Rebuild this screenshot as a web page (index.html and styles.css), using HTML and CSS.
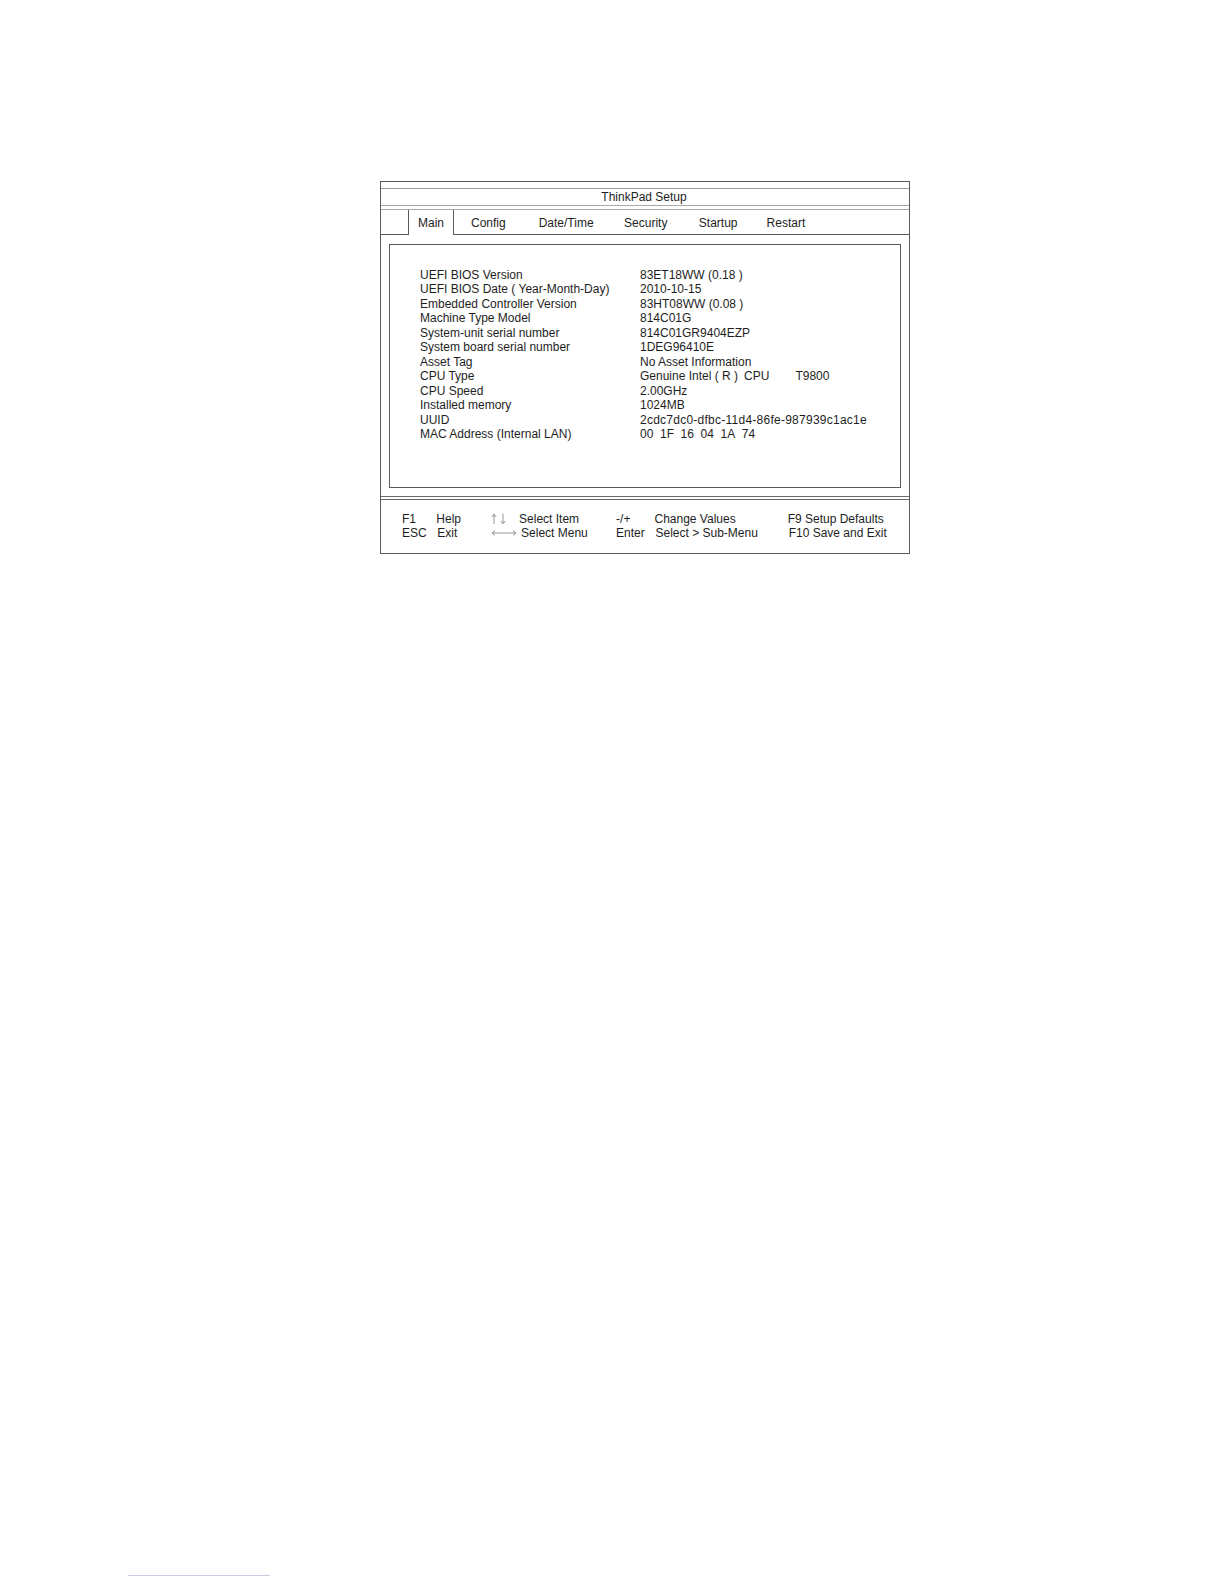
FILE: index.html
```html
<!DOCTYPE html>
<html>
<head>
<meta charset="utf-8">
<title>ThinkPad Setup</title>
<link rel="stylesheet" href="styles.css">
</head>
<body>
<div class="page">
  <div class="setup">
    <div class="top-strip"></div>
    <div class="title">ThinkPad Setup</div>
    <div class="double"></div>
    <div class="tabs">
      <div class="tab-spacer"></div>
      <div class="tab active">Main</div>
      <div class="tab-rest">
        <span class="tab t-config">Config</span>
        <span class="tab t-date">Date/Time</span>
        <span class="tab t-sec">Security</span>
        <span class="tab t-start">Startup</span>
        <span class="tab t-restart">Restart</span>
      </div>
    </div>
    <div class="content">
      <div class="panel">
        <div class="info">
          <div class="lbl">UEFI BIOS Version</div><div class="val">83ET18WW (0.18 )</div>
          <div class="lbl">UEFI BIOS Date ( Year-Month-Day)</div><div class="val">2010-10-15</div>
          <div class="lbl">Embedded Controller Version</div><div class="val">83HT08WW (0.08 )</div>
          <div class="lbl">Machine Type Model</div><div class="val">814C01G</div>
          <div class="lbl">System-unit serial number</div><div class="val">814C01GR9404EZP</div>
          <div class="lbl">System board serial number</div><div class="val">1DEG96410E</div>
          <div class="lbl">Asset Tag</div><div class="val">No Asset Information</div>
          <div class="lbl">CPU Type</div><div class="val"><span class="cpu-a">Genuine Intel ( R )</span><span class="cpu-b">CPU</span><span class="cpu-c">T9800</span></div>
          <div class="lbl">CPU Speed</div><div class="val">2.00GHz</div>
          <div class="lbl">Installed memory</div><div class="val">1024MB</div>
          <div class="lbl">UUID</div><div class="val uuid">2cdc7dc0-dfbc-11d4-86fe-987939c1ac1e</div>
          <div class="lbl">MAC Address (Internal LAN)</div><div class="val"><span class="mac">00</span><span class="mac">1F</span><span class="mac">16</span><span class="mac">04</span><span class="mac">1A</span><span class="mac">74</span></div>
        </div>
      </div>
    </div>
    <div class="double thin"></div>
    <div class="footer">
      <div>F1</div><div>Help</div>
      <div class="arrows"><svg width="20" height="12" viewBox="0 0 20 12"><path d="M3 11V1.5M0.8 4L3 1.2L5.2 4M12 0.5V10.5M9.8 8L12 10.8L14.2 8" fill="none" stroke="#8a8a8a" stroke-width="0.9"/></svg></div><div>Select Item</div>
      <div>-/+</div><div>Change Values</div>
      <div>F9 Setup Defaults</div>
      <div>ESC</div><div class="exit">Exit</div>
      <div class="arrows"><svg width="26" height="12" viewBox="0 0 26 12"><path d="M1 6H25M4 3.8L1 6L4 8.2M22 3.8L25 6L22 8.2" fill="none" stroke="#8a8a8a" stroke-width="0.9"/></svg></div><div class="smenu">Select Menu</div>
      <div>Enter</div><div class="sub">Select &gt; Sub-Menu</div>
      <div class="f10">F10 Save and Exit</div>
    </div>
  </div>
  <div class="footnote-rule"></div>
</div>
</body>
</html>
```

FILE: styles.css
```css
html, body {
  margin: 0;
  padding: 0;
  background: #ffffff;
}

body {
  font-family: "Liberation Sans", Arial, Helvetica, sans-serif;
  font-size: 12px;
  color: #1e1e1e;
}

.page {
  padding-top: 181px;
  padding-left: 380px;
}

.setup {
  width: 528px;
  border: 1px solid #5a5a5a;
  display: flex;
  flex-direction: column;
}

.top-strip {
  height: 6px;
  border-bottom: 1px solid #9a9a9a;
}

.title {
  height: 16px;
  line-height: 16px;
  text-align: center;
  padding-right: 2px;
}

.double {
  height: 3px;
  border-top: 1px solid #a8a8a8;
  border-bottom: 1px solid #a8a8a8;
}

.double.thin {
  height: 2px;
  border-color: #6a6a6a;
}

.tabs {
  display: flex;
  height: 25px;
}

.tab-spacer {
  width: 27px;
  border-bottom: 1px solid #5a5a5a;
}

.tab {
  line-height: 24px;
  padding-top: 1px;
}

.tab.active {
  width: 44px;
  text-align: center;
  border-left: 1px solid #5a5a5a;
  border-right: 1px solid #5a5a5a;
}

.tab-rest {
  flex: 1;
  display: flex;
  border-bottom: 1px solid #5a5a5a;
  padding-left: 17px;
}

.t-config { margin-right: 33px; }
.t-date { margin-right: 30.5px; }
.t-sec { margin-right: 31.4px; }
.t-start { margin-right: 29px; }

.content {
  padding: 9px 8px 8px 8px;
}

.panel {
  height: 244px;
  border: 1px solid #5a5a5a;
  padding: 23px 0 0 30px;
  box-sizing: border-box;
}

.info {
  display: grid;
  grid-template-columns: 220px 1fr;
  line-height: 14.45px;
}

.cpu-a { margin-right: 6px; }
.cpu-b { margin-right: 26px; }

.uuid {
  letter-spacing: 0.25px;
}

.mac { margin-right: 6.6px; }

.footer {
  height: 41px;
  display: grid;
  grid-template-columns: 34.3px 54.6px 28.2px 97px 38.4px 133.2px 1fr;
  grid-auto-rows: 14.2px;
  align-content: start;
  padding: 12px 0 0 21px;
  line-height: 14.2px;
}

.arrows {
  display: flex;
  align-items: center;
}

.exit { padding-left: 1px; }
.smenu { padding-left: 2px; }
.sub { padding-left: 1px; }
.f10 { padding-left: 1px; }

.footnote-rule {
  width: 142px;
  margin-left: -252px;
  margin-top: 1021px;
  border-top: 1px solid #c9cde0;
}
```
